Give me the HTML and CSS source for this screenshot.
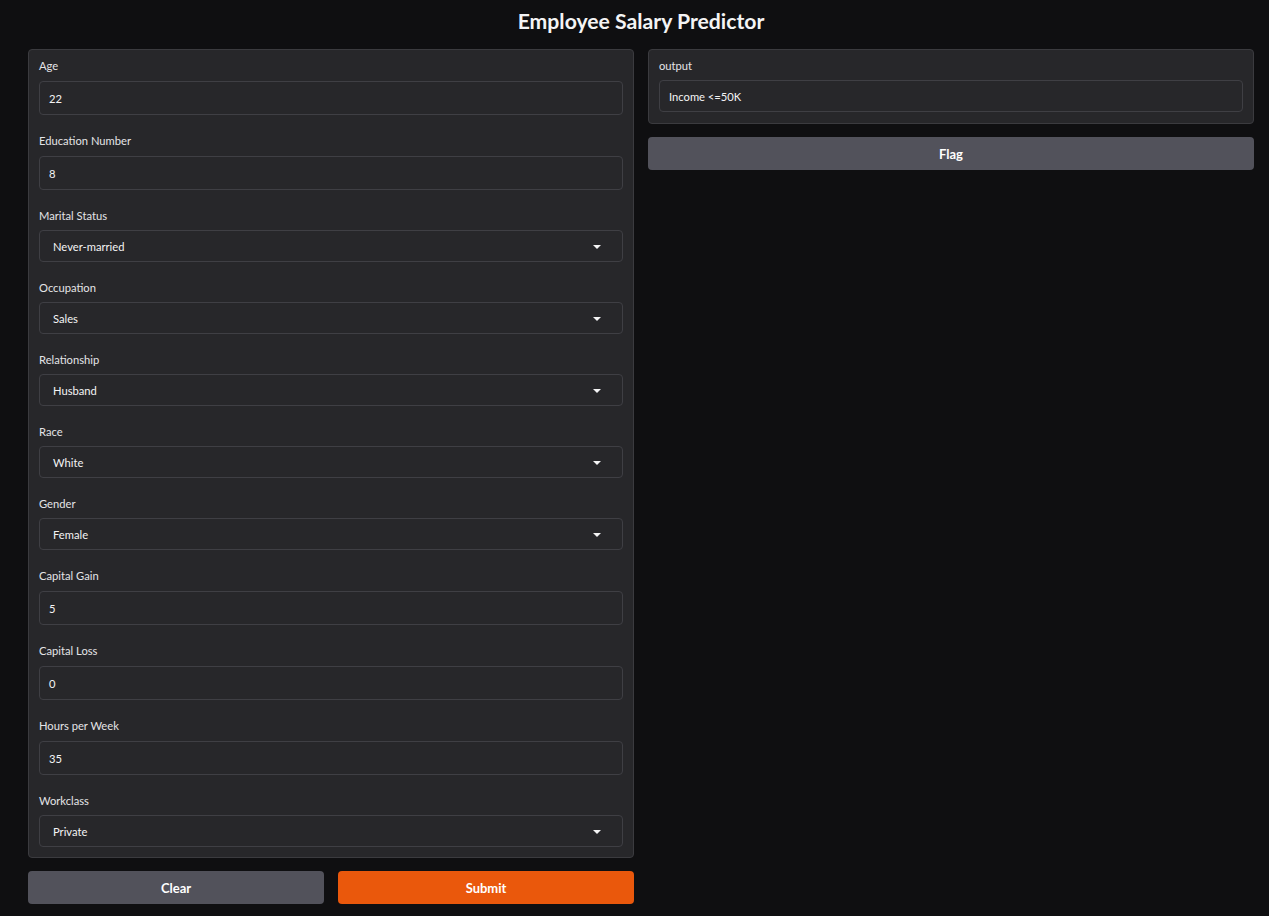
FILE: index.html
```html
<!DOCTYPE html>
<html lang="en">
<head>
<meta charset="utf-8">
<title>Employee Salary Predictor</title>
<link rel="stylesheet" href="styles.css">
</head>
<body>
<div class="app">
  <h1 class="title">Employee Salary Predictor</h1>
  <div class="columns">
    <div class="col">
      <div class="panel">
        <div class="field"><label class="label">Age</label><div class="input num">22</div></div>
        <div class="field"><label class="label">Education Number</label><div class="input num">8</div></div>
        <div class="field dd"><label class="label">Marital Status</label><div class="input select"><span>Never-married</span><span class="caret"></span></div></div>
        <div class="field dd"><label class="label">Occupation</label><div class="input select"><span>Sales</span><span class="caret"></span></div></div>
        <div class="field dd"><label class="label">Relationship</label><div class="input select"><span>Husband</span><span class="caret"></span></div></div>
        <div class="field dd"><label class="label">Race</label><div class="input select"><span>White</span><span class="caret"></span></div></div>
        <div class="field dd"><label class="label">Gender</label><div class="input select"><span>Female</span><span class="caret"></span></div></div>
        <div class="field"><label class="label">Capital Gain</label><div class="input num">5</div></div>
        <div class="field"><label class="label">Capital Loss</label><div class="input num">0</div></div>
        <div class="field"><label class="label">Hours per Week</label><div class="input num">35</div></div>
        <div class="field dd"><label class="label">Workclass</label><div class="input select"><span>Private</span><span class="caret"></span></div></div>
      </div>
      <div class="btn-row">
        <button class="btn secondary">Clear</button>
        <button class="btn primary">Submit</button>
      </div>
    </div>
    <div class="col">
      <div class="panel out">
        <div class="field dd"><label class="label">output</label><div class="input text">Income &lt;=50K</div></div>
      </div>
      <button class="btn secondary solo">Flag</button>
    </div>
  </div>
</div>
</body>
</html>
```
FILE: styles.css
```css
* { box-sizing: border-box; }
html, body { margin: 0; padding: 0; }
body {
  background: #0f0f11;
  color: #f4f4f5;
  font-family: Lato, "Liberation Sans", sans-serif;
  width: 1269px;
  height: 916px;
  overflow: hidden;
}
.app {
  padding: 0 15px 0 28px;
}
.title {
  margin: 0;
  height: 43px;
  padding-top: 8px;
  text-align: center;
  font-size: 21.2px;
  line-height: 26px;
  font-weight: 700;
  color: #f4f4f5;
}
.columns {
  display: flex;
  gap: 14px;
  margin-top: 6px;
  align-items: flex-start;
}
.col {
  flex: 1 1 0;
  display: flex;
  flex-direction: column;
  gap: 13px;
  min-width: 0;
}
.panel {
  background: #27272a;
  border: 1px solid #3b3b3f;
  border-radius: 4px;
  padding: 8px 10px 10px 10px;
  display: flex;
  flex-direction: column;
  gap: 18px;
}
.panel.out { padding-bottom: 11px; }
.field { display: flex; flex-direction: column; }
.label {
  font-size: 11.2px;
  line-height: 16px;
  height: 16px;
  color: #e4e4e7;
  margin-bottom: 7px;
}
.dd .label { margin-bottom: 6px; }
.input {
  background: #27272a;
  border: 1px solid #3f3f44;
  border-radius: 4px;
  font-size: 11.2px;
  color: #f4f4f5;
  display: flex;
  align-items: center;
}
.input.num { height: 34px; padding-left: 9px; }
.input.select { height: 32px; padding: 0 21px 0 13px; justify-content: space-between; }
.input.text { height: 32px; padding-left: 9px; }
.caret {
  width: 0; height: 0;
  border-left: 4px solid transparent;
  border-right: 4px solid transparent;
  border-top: 4px solid #f4f4f5;
  margin-top: 1px;
}
.btn-row {
  display: flex;
  gap: 14px;
}
.btn {
  flex: 1 1 0;
  height: 33px;
  border: none;
  border-radius: 4px;
  font-family: inherit;
  font-size: 13px;
  font-weight: 700;
  color: #ffffff;
  cursor: pointer;
}
.btn.solo { flex: none; }
.btn.secondary { background: #52525b; }
.btn.primary { background: #ea580c; }
```
